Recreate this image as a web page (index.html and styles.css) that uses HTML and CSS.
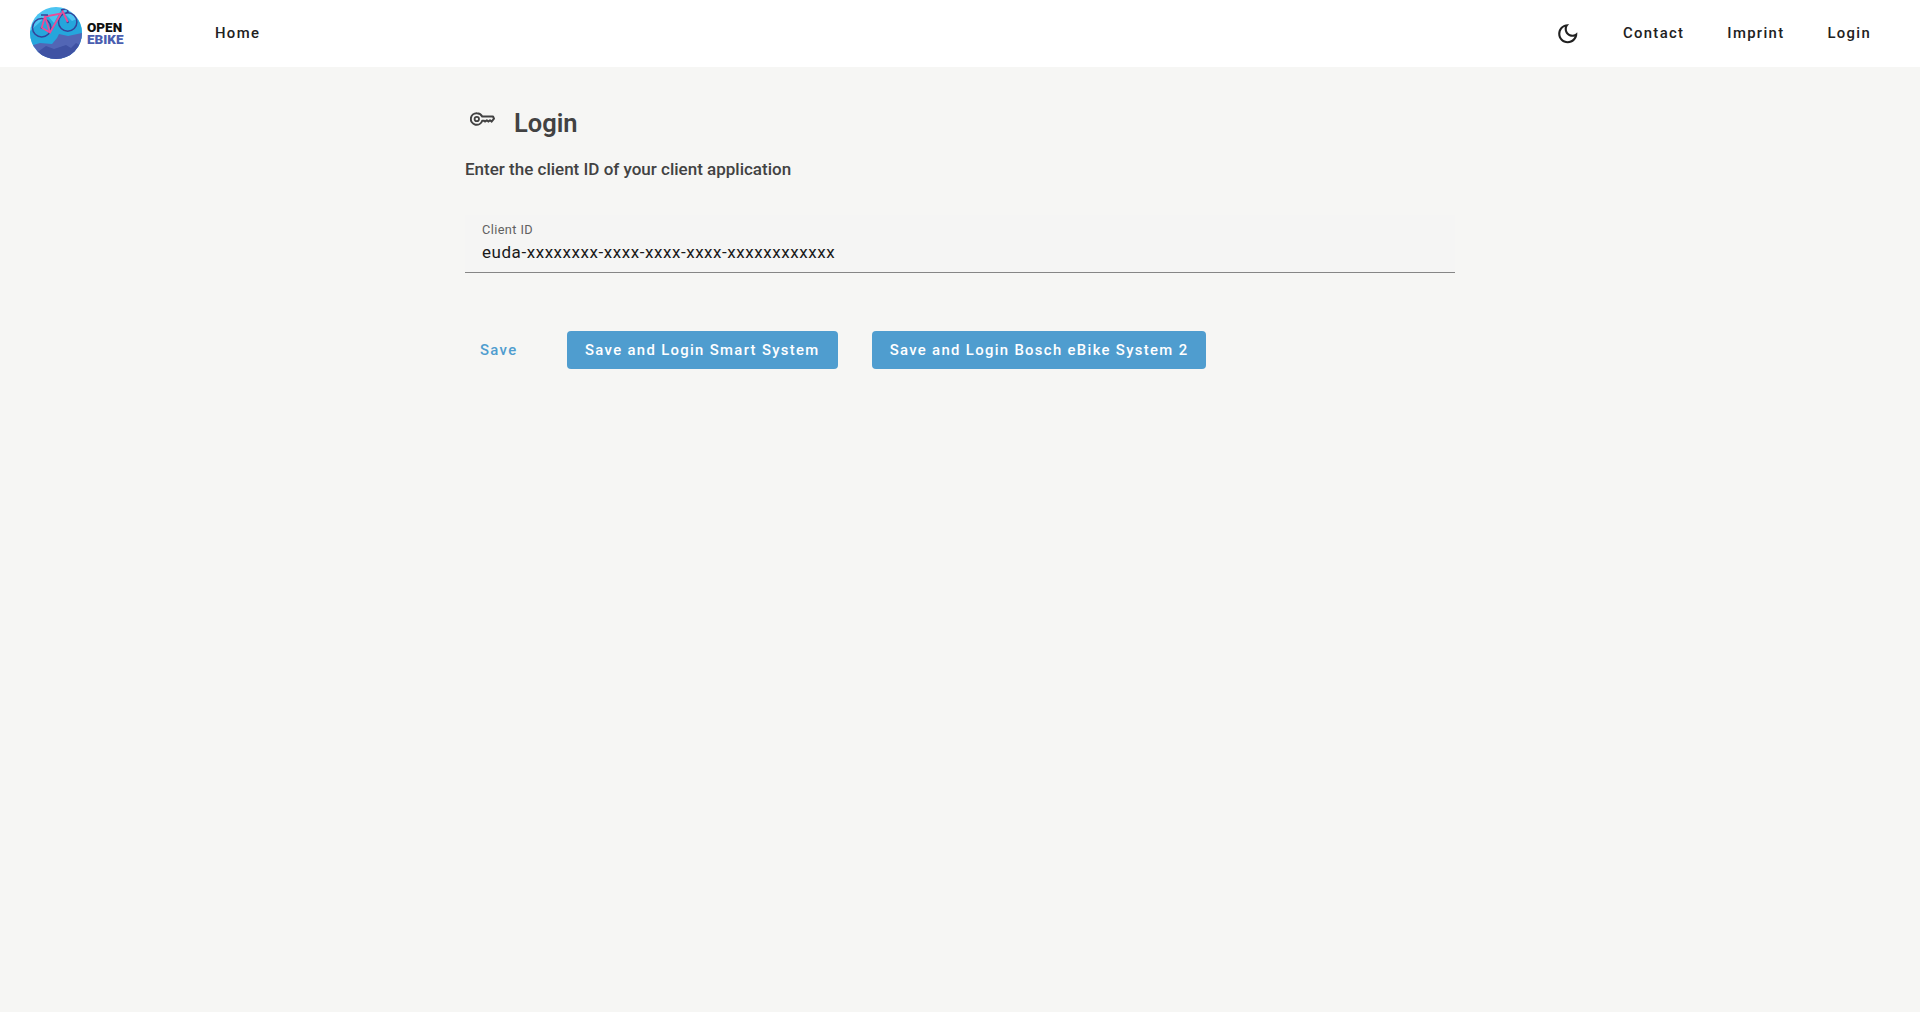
FILE: index.html
```html
<!DOCTYPE html>
<html lang="en">
<head>
<meta charset="utf-8">
<title>Login - Open eBike</title>
<link rel="stylesheet" href="styles.css">
</head>
<body>
<header class="bar">
  <a class="logo">
    <svg class="logo-mark" viewBox="0 0 52 52" aria-hidden="true">
      <defs><clipPath id="disc"><circle cx="26" cy="26" r="26"/></clipPath></defs>
      <g clip-path="url(#disc)">
        <rect width="52" height="52" fill="#4cc4f1"/>
        <path d="M0 24 L9 16 L17 8 L24 16 L31 3 L42 14 L52 10 V40 H0Z" fill="#25a6dc"/>
        <path d="M0 39 L10 36 L22 37 L27 31 L29 27 L38 29 L52 26 V52 H0Z" fill="#5266b5"/>
        <path d="M5 47 L16 39 L24 42 L36 38 L41 41 L46 36 L52 39 V52 H5Z" fill="#3f52a3"/>
        <g fill="none" stroke="#35439a" stroke-width="1.5">
          <circle cx="11.7" cy="20.7" r="9.2"/>
          <circle cx="37.7" cy="15" r="9.2"/>
        </g>
        <circle cx="11.7" cy="20.7" r="1.2" fill="#35439a"/>
        <circle cx="37.7" cy="15" r="1.2" fill="#35439a"/>
        <g fill="none" stroke="#ee4a97" stroke-width="1.8">
          <path d="M11.7 20.7 L15 9.5 L31 6.5 L20 25.5 L11.7 20.7Z"/>
          <path d="M15 9.5 L20 25.5"/>
          <path d="M37.7 15 L32 3"/>
        </g>
        <path d="M11 8 H18 M31 3 L37 1.5 L38 5 L36 6" fill="none" stroke="#35439a" stroke-width="1.6"/>
      </g>
    </svg>
    <span class="logo-text"><span class="logo-open">OPEN</span><span class="logo-ebike">EBIKE</span></span>
  </a>
  <nav class="nav-left"><a class="nav-btn">Home</a></nav>
  <nav class="nav-right">
    <svg class="moon" viewBox="0 0 24 24" aria-hidden="true"><path d="M9.37 5.51c-.18.64-.27 1.31-.27 1.99 0 4.08 3.32 7.4 7.4 7.4.68 0 1.35-.09 1.99-.27C17.45 17.19 14.93 19 12 19c-3.86 0-7-3.14-7-7 0-2.93 1.81-5.45 4.37-6.49zM12 3c-4.97 0-9 4.03-9 9s4.03 9 9 9 9-4.03 9-9c0-.46-.04-.92-.1-1.36-.98 1.37-2.58 2.26-4.4 2.26-2.98 0-5.4-2.42-5.4-5.4 0-1.81.89-3.42 2.26-4.4-.44-.06-.9-.1-1.36-.1z" fill="#212121"/></svg>
    <a class="nav-btn">Contact</a>
    <a class="nav-btn">Imprint</a>
    <a class="nav-btn">Login</a>
  </nav>
</header>
<main class="page">
  <h1 class="title">
    <svg class="key" viewBox="0 0 25 14" aria-hidden="true"><path d="M7 1.2a5.8 5.8 0 0 1 5.2 3.3H23L24 6.6L21.6 9.6L20 8.2L18.4 9.6L16.8 8.2L15.2 9.6L13.8 8.7H12.2A5.8 5.8 0 1 1 7 1.2Z" fill="none" stroke="#424242" stroke-width="2" stroke-linejoin="round"/><circle cx="6.8" cy="7" r="2.2" fill="none" stroke="#424242" stroke-width="1.8"/></svg>
    <span>Login</span>
  </h1>
  <p class="lead">Enter the client ID of your client application</p>
  <div class="field">
    <label class="field-label" for="cid">Client ID</label>
    <input class="field-input" id="cid" type="text" value="euda-xxxxxxxx-xxxx-xxxx-xxxx-xxxxxxxxxxxx">
  </div>
  <div class="actions">
    <a class="btn btn-text">Save</a>
    <a class="btn btn-fill">Save and Login Smart System</a>
    <a class="btn btn-fill">Save and Login Bosch eBike System 2</a>
  </div>
</main>
</body>
</html>
```

FILE: styles.css
```css
* { box-sizing: border-box; }
html, body { margin: 0; height: 100%; }
body {
  background: #f6f6f4;
  font-family: Roboto, "Liberation Sans", sans-serif;
  color: #212121;
  overflow: hidden;
}
.bar {
  height: 67px;
  background: #fff;
  display: flex;
  align-items: center;
  padding: 0 27px 2px 30px;
}
.logo { display: flex; align-items: center; gap: 5px; width: 168px; }
.logo-mark { width: 52px; height: 52px; flex: none; }
.logo-text { display: flex; flex-direction: column; font-weight: 900; font-size: 13.5px; line-height: 12px; margin-top: 1px; }
.logo-open { color: #111; }
.logo-ebike { color: #4a5eb0; }
.nav-left { flex: 1; display: flex; }
.nav-right { display: flex; align-items: center; }
.nav-btn {
  font-size: 14.875px;
  font-weight: 500;
  letter-spacing: 1.328px;
  padding: 0 22px 0 21px;
  line-height: 36px;
}
.nav-left .nav-btn { padding: 0 17px; }
.moon { width: 25.5px; height: 25.5px; margin: 2px 21.5px 0 0; }
.page { width: 990px; margin: 0 auto; padding-top: 23px; color: #424242; }
.title {
  display: flex;
  align-items: center;
  margin: 0;
  font-size: 25.5px;
  font-weight: 600;
  line-height: 66px;
  height: 66px;
}
.key { width: 25px; height: 14px; margin: -9px 19px 0 5px; }
.lead { margin: 1px 0 0; font-size: 17px; font-weight: 500; line-height: 25.5px; }
.field {
  margin-top: 32px;
  height: 58px;
  padding: 7px 17px 0;
  background: #f5f5f4;
  border-bottom: 1px solid #868686;
  display: flex;
  flex-direction: column;
}
.field-label { font-size: 12.75px; line-height: 16px; color: #616161; letter-spacing: .4px; }
.field-input {
  border: 0;
  background: none;
  outline: 0;
  padding: 0;
  margin-top: 2px;
  font: 400 17px/24px Roboto, sans-serif;
  letter-spacing: .55px;
  color: #1a1a1a;
  width: 100%;
}
.actions { display: flex; align-items: center; margin-top: 58px; }
.btn {
  height: 38px;
  display: flex;
  align-items: center;
  font-size: 14.875px;
  font-weight: 500;
  letter-spacing: 1.328px;
  padding: 0 18px;
  border-radius: 4px;
}
.btn-text { color: #4f9dcf; padding: 0 15px; width: 102px; }
.btn-fill { background: #4f9dcf; color: #fff; margin-right: 34px; }
```
